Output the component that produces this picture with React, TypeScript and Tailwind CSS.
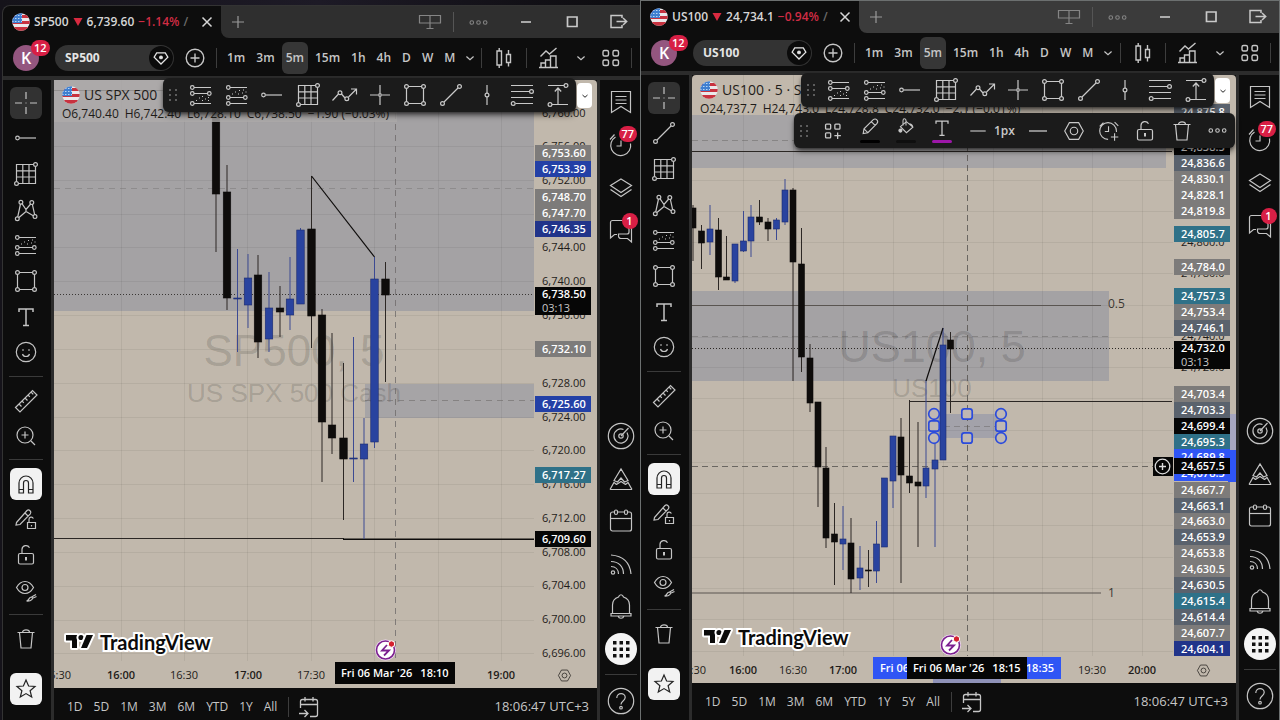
import type { ReactNode } from 'react';
import clsx from 'clsx';

type Candle = [x: number, high: number, top: number, bottom: number, low: number, up?: 1];
type Tag = { y: number; text: string; tone: Tone; sub?: string };
type Tone = 'gray' | 'slate' | 'black' | 'blue' | 'navy' | 'teal' | 'bright' | 'plain';
type TimeTag = { x: number; text: string; bold?: boolean };

const TONES: Record<Tone, string> = {
  gray: 'bg-[#7d7b7a] text-white font-semibold',
  slate: 'bg-[#5a626d] text-white font-semibold',
  black: 'bg-[#060606] text-white font-semibold',
  blue: 'bg-[#2340a6] text-white font-semibold',
  navy: 'bg-[#21348a] text-white font-semibold',
  teal: 'bg-[#2f7188] text-white font-semibold',
  bright: 'bg-[#2f55f5] text-white font-semibold',
  plain: 'text-[#1f1c19]',
};

/* ---------- icons ---------- */

function Icon({ children, size = 28 }: { children: ReactNode; size?: number }) {
  return (
    <svg
      width={size}
      height={size}
      viewBox="0 0 28 28"
      fill="none"
      stroke="currentColor"
      strokeWidth="1.2"
      className="shrink-0"
      aria-hidden="true"
    >
      {children}
    </svg>
  );
}

const icons = {
  cross: <path d="M14 3v7M14 18v7M3 14h7M18 14h7M13.5 14h1" />,
  ray: (
    <>
      <circle cx="5.5" cy="14" r="1.8" />
      <path d="M7.5 14H24" />
    </>
  ),
  trend: (
    <>
      <circle cx="5.5" cy="22.5" r="1.9" />
      <circle cx="22.5" cy="5.5" r="1.9" />
      <path d="M7 21 21 7" />
    </>
  ),
  gann: (
    <>
      <path d="M21 4.500H4.500V21M7 23.500h16.500V7M4.500 10.800h19M4.500 17h19M10.800 4.500v19M17 4.500v19" />
      <circle cx="23.500" cy="4.500" r="1.900" />
      <circle cx="4.500" cy="23.500" r="1.900" />
    </>
  ),
  pattern: (
    <>
      <path d="M5.700 21 8.500 8M9.800 7.300l4.200 6.200 4.700-5.500M20.300 8.200l2.400 10.600M7 21.500l7-6 7.300 4.200M14 13.500v2" />
      <circle cx="5.300" cy="22.800" r="1.900" />
      <circle cx="8.900" cy="6.200" r="1.900" />
      <circle cx="19.800" cy="6.600" r="1.900" />
      <circle cx="23" cy="20.600" r="1.900" />
    </>
  ),
  fib: (
    <>
      <path d="M7 6.500h17M7 12.500h13.500M7 22.500h17" />
      <circle cx="5.300" cy="6.500" r="1.800" />
      <circle cx="5.300" cy="12.500" r="1.800" />
      <circle cx="22.300" cy="12.500" r="1.800" />
      <circle cx="5.300" cy="22.500" r="1.800" />
      <path d="M9 19.500h1M12 17h1M15 19.500h1M15 15.500h1M18 18h1M21 16.500h1M21 19.500h1" />
    </>
  ),
  fibChannel: (
    <>
      <path d="M7 6.500h17M7 16.500h13.500M7 22.500h17" />
      <circle cx="5.300" cy="6.500" r="1.800" />
      <circle cx="5.300" cy="16.500" r="1.800" />
      <circle cx="22.300" cy="16.500" r="1.800" />
      <circle cx="5.300" cy="22.500" r="1.800" />
      <path d="M9 13h1M12 11h1M15 13h1M16 9.500h1M19 12h1M20 9h1M22.500 11h1" />
    </>
  ),
  rect: (
    <>
      <path d="M7.500 5.500h13M7.500 22.500h13M5.500 7.500v13M22.500 7.500v13" />
      <circle cx="5.500" cy="5.500" r="1.900" />
      <circle cx="22.500" cy="5.500" r="1.900" />
      <circle cx="5.500" cy="22.500" r="1.900" />
      <circle cx="22.500" cy="22.500" r="1.900" />
    </>
  ),
  path: (
    <>
      <path d="m2.500 19.500 6-6.500M11.500 13l3.500 4M18.500 16 26 8.500M21 8h5.500v5.500" />
      <circle cx="10" cy="11.800" r="1.900" />
      <circle cx="16.800" cy="17.800" r="1.900" />
    </>
  ),
  crossLine: (
    <>
      <path d="M14 4v8M14 16v8M4 14h8M16 14h8" />
      <circle cx="14" cy="14" r="1.300" />
    </>
  ),
  vline: (
    <>
      <path d="M14 4v8M14 16v8" />
      <circle cx="14" cy="14" r="1.900" />
    </>
  ),
  levels: (
    <>
      <path d="M3 4.500h22M3 10.500h18.500M3 16.500h22M7.500 22.500H25" />
      <circle cx="23.500" cy="10.500" r="1.900" />
      <circle cx="5.200" cy="22.500" r="1.900" />
    </>
  ),
  range: (
    <>
      <path d="M4 4.500h16M8 23.500h16M14 8v15M10.800 10.500 14 7l3.200 3.500" />
      <circle cx="22" cy="4.500" r="1.900" />
      <circle cx="6" cy="23.500" r="1.900" />
    </>
  ),
  text: <path strokeWidth="1.500" d="M7 9V6h14v3M14 6v16.500M11 22.500h6" />,
  smile: (
    <>
      <circle cx="14" cy="14" r="9.700" />
      <path d="M10.500 16c.8 3.300 6.200 3.300 7 0" />
      <path strokeWidth="2" d="M10.500 12h1M16.500 12h1" />
    </>
  ),
  ruler: (
    <path d="M3.500 20.500 20.500 3.500l4.500 4.500L8 25zM7 17l2.500 2.500M10 14l1.800 1.800M13 11l2.500 2.500M16 8l1.800 1.800M19 5l2.300 2.300" />
  ),
  zoom: (
    <>
      <circle cx="13" cy="13" r="8" />
      <path d="M13 9.500v7M9.500 13h7M19 19l4 4" />
    </>
  ),
  magnet: <path d="M7 23V13a7 7 0 0 1 14 0v10h-4.500V13a2.500 2.500 0 0 0-5 0v10zM7 19.500h4.500M16.500 19.500H21" />,
  pencilLock: (
    <>
      <path d="M4.500 17.500 15 5.500c2-1.500 5 1 3.300 3.300L8 19.500l-4 .5zM13 8l3 3M15.500 17.500h8v6h-8zM17 17.500v-3a2.200 2.200 0 0 1 4.300-.8M19.500 20v1.500" />
    </>
  ),
  unlock: (
    <>
      <rect x="6.500" y="12.500" width="15" height="10.500" rx="1.500" />
      <path d="M10 12.500V8.300a4 4 0 0 1 7.500-1.600" />
      <path strokeWidth="2" d="M14 16v3.500" />
    </>
  ),
  eye: (
    <>
      <path d="M4.500 11.500C9 3.500 17 3.500 21.500 11.500 17 19.500 9 19.500 4.500 11.500zM14.500 25c3-.500 2-4 5-4 2.500 1 0 4.500-5 4zM19.500 21l4.500-2.500M20 22.500l4.500-2" />
      <circle cx="13" cy="11.500" r="3" />
    </>
  ),
  trash: <path d="M5.500 7.500h17M7.500 7.500l1.500 15.500h10l1.500-15.500M10.500 7.500c0-3.500 7-3.500 7 0" />,
  star: <path d="m14 5 2.600 6 6.400.500-4.900 4.200 1.600 6.300L14 18.600 8.300 22l1.600-6.300L5 11.500l6.400-.500z" />,
  notes: <path d="M4.500 3.500h19v21L14 18.500l-9.500 6zM8.500 8.500h11M8.500 12h11M8.500 15.500h11" />,
  alarm: <path d="M8.500 6A10 10 0 1 0 23.500 12.500M14 9.500V15H9.500M3 8.500l4.500-5" />,
  layers: <path d="m14 5 10.500 6.500L14 18.500 3.500 11.500zM3.500 15.500 14 22.500l10.500-7" />,
  chat: (
    <path d="M21.500 12V5.500a2 2 0 0 0-2-2h-14a2 2 0 0 0-2 2V21l4-3.500H10M24.500 10.500V25l-4-3.500h-6.500a2.500 2.500 0 0 1-2.500-2.500v-2h8.500a2 2 0 0 0 2-2V12" />
  ),
  radar: (
    <>
      <circle cx="14" cy="14" r="12.700" />
      <path d="M20 10.500A7 7 0 1 1 16.500 7.500M14 14l7.500-8" />
      <circle cx="14" cy="14" r="2.200" />
    </>
  ),
  pyramids: <path d="m3 24.500 4-7 2.500 2M25 24.500l-4-7-2.500 2M3 24.500h22M9.500 19.500l4.500-3 4.500 3M7 15.500l7-11.500 7 11.500-3.500 1.500-3.500-4-3.500 4z" />,
  calendar: (
    <>
      <rect x="3.500" y="5" width="21" height="19" rx="2" />
      <path d="M3.500 11.500h21" />
      <rect x="7.500" y="3" width="3" height="4.500" rx="1.500" fill="#0d0d0d" />
      <rect x="17.500" y="3" width="3" height="4.500" rx="1.500" fill="#0d0d0d" />
    </>
  ),
  feed: (
    <>
      <circle cx="6" cy="22.500" r="1.700" />
      <path d="M4 16.500c4.500 0 7.500 3 7.500 7.500M4 11.500c7.500 0 12.500 5 12.500 12.500M4 5c12 1 19 8 20 19" />
    </>
  ),
  bell: <path d="M4 21.500h20v2.500H4zM5.500 21.500V13c0-4.500 3-7 6-8 1-3 4-3 5 0 3 1 6 3.500 6 8v8.500M11 24c1 3 5 3 6 0" />,
  help: (
    <>
      <circle cx="14" cy="14" r="12.700" />
      <path d="M9.800 11c0-6 8.700-5.500 8.400-.500-.200 3.500-4.200 3.500-4.200 7" />
      <circle cx="14" cy="20.700" r="1.300" />
    </>
  ),
  hex: (
    <>
      <path d="M9 5h10l5 9-5 9H9l-5-9z" />
      <circle cx="14" cy="14" r="4" />
    </>
  ),
  candles: <path strokeWidth="1.400" d="M7 7h4.500v14H7zM9.200 4v3M9.200 21v3M16.500 10.500h4v8h-4zM18.500 6v4.500M18.500 18.500v4" />,
  indicators: (
    <path
      strokeWidth="1.400"
      d="m5.500 12.500 5.500-5.500 3.500 3 7-6M6 23.500v-4.500h4.500v4.500zM10.500 23.500V16h5v7.500zM15.500 23.500V12h5.500v11.500zM4 23.500h19"
    />
  ),
  tiles: (
    <>
      <rect x="6" y="6.500" width="5.500" height="5.500" rx="1.500" strokeWidth="1.400" />
      <rect x="16" y="6.500" width="5.500" height="5.500" rx="1.500" strokeWidth="1.400" />
      <rect x="6" y="16" width="5.500" height="5.500" rx="1.500" strokeWidth="1.400" />
      <rect x="16" y="16" width="5.500" height="5.500" rx="1.500" strokeWidth="1.400" />
    </>
  ),
  template: (
    <>
      <rect x="6" y="6.500" width="5.500" height="5.500" rx="1" strokeWidth="1.400" />
      <rect x="16" y="6.500" width="5.500" height="5.500" rx="1" strokeWidth="1.400" />
      <rect x="6" y="16" width="5.500" height="5.500" rx="1" strokeWidth="1.400" />
      <path strokeWidth="1.400" d="M19 15.500v7M15.500 19h7" />
    </>
  ),
  plusCircle: (
    <>
      <circle cx="14" cy="14" r="8.800" strokeWidth="1.400" />
      <path strokeWidth="1.400" d="M14 9.500v9M9.500 14h9" />
    </>
  ),
  gem: (
    <>
      <path d="M9 8h10l3 5-8 8-8-8z" strokeWidth="1.500" />
      <circle cx="14" cy="13.300" r="1.600" fill="currentColor" />
    </>
  ),
  goTo: (
    <path
      strokeWidth="1.300"
      d="M5.500 15V8.500a2 2 0 0 1 2-2h13a2 2 0 0 1 2 2v13a2 2 0 0 1-2 2H15M5.500 11.500h17M10 4v4.500M18 4v4.500M4 20.500h8.500M9.500 17l3.500 3.500L9.500 24"
    />
  ),
  chevron: <path strokeWidth="1.700" d="m9 12 5 4.500 5-4.500" />,
  plus: <path d="M14 8v12M8 14h12" />,
  close: <path strokeWidth="1.500" d="m9.500 9.500 9 9M18.500 9.500l-9 9" />,
  dots: (
    <>
      <circle cx="6.500" cy="14" r="2" />
      <circle cx="14" cy="14" r="2" />
      <circle cx="21.500" cy="14" r="2" />
    </>
  ),
  signpost: <path d="M3.500 7.500h21v7.500h-21zM14 7v13M10.500 20.500h7" />,
  minimize: <path strokeWidth="1.600" d="M9 14h10" />,
  maximize: <path strokeWidth="1.700" d="M9.500 9h9.500v9.500H9.500z" />,
  exit: <path strokeWidth="1.500" d="M18 10V7.500H7v12h11V17M12.500 13.500h10M19 10l3.700 3.500L19 17" />,
  pencil: <path strokeWidth="1.300" d="M6 20.500 7 15 17.500 4.500q2.500-2 4.500 0t0 4.500L11.500 19.500zM15.500 6.500l4.500 4.500M7 15l4.500 4.500" />,
  bucket: (
    <>
      <path d="m7.500 12.500 7-6 7.500 6.500-7.500 6.500zM14 11V5.500c0-3-3.500-3-3.500 0V11M22 13.500c0-2-1.500-4-4-4.500" />
      <circle cx="7.500" cy="17" r="1.800" fill="currentColor" />
    </>
  ),
  line: <path strokeWidth="1.300" d="M5 14h18" />,
  alarmAdd: (
    <path d="M13 23a9 9 0 1 1 9-9v1M13.500 9v5.500H9.500M4 9l4-4M20 4.500l4 4M20 16.500v8M16 20.500h8" />
  ),
};

type IconName = keyof typeof icons;

function ToolButton({ name, size, className }: { name: IconName; size?: number; className?: string }) {
  return (
    <button type="button" aria-label={name} className={clsx('flex items-center justify-center', className)}>
      <Icon size={size}>{icons[name]}</Icon>
    </button>
  );
}

function Flag() {
  return (
    <svg width="18" height="18" viewBox="0 0 18 18" className="shrink-0" aria-hidden="true">
      <clipPath id="flag-disc">
        <circle cx="9" cy="9" r="8.700" />
      </clipPath>
      <g clipPath="url(#flag-disc)">
        <path fill="#ece8ea" d="M0 0h18v18H0z" />
        <path fill="#c8323f" d="M0 2h18v3H0zM0 8h18v3H0zM0 14h18v4H0z" />
        <path fill="#3f7fd0" d="M0 0h10v10H0z" />
        <path stroke="#b9d6f3" strokeWidth="1" strokeDasharray="1.500 1.500" d="M0 2.500h10M0 5.500h10M0 8.500h10" />
      </g>
    </svg>
  );
}

function Grip() {
  return (
    <svg width="10" height="14" viewBox="0 0 10 14" fill="#5c5c5c" className="mx-[5px] shrink-0" aria-hidden="true">
      {[1, 6, 11].map((y) => (
        <g key={y}>
          <rect x="1" y={y} width="2" height="2" />
          <rect x="7" y={y} width="2" height="2" />
        </g>
      ))}
    </svg>
  );
}

function Separator() {
  return <span className="h-5 w-px shrink-0 bg-[#3d3d3d]" />;
}

function Badge({ children, className }: { children: ReactNode; className: string }) {
  return (
    <span
      className={clsx(
        'absolute flex h-4 min-w-4 items-center justify-center rounded-full bg-[#d81f45] px-[3px] text-[11px] font-semibold text-white',
        className,
      )}
    >
      {children}
    </span>
  );
}

/* ---------- window chrome ---------- */

function TabBar({ symbol, price, change, light }: { symbol: string; price: string; change: string; light?: boolean }) {
  return (
    <div className="flex h-8 shrink-0">
      <div className="flex w-[218px] shrink-0 items-center pl-[9px] text-xs font-semibold text-[#d6d6d6]">
        <Flag />
        <span className="ml-1">{symbol}</span>
        <svg width="10" height="10" viewBox="0 0 10 10" className="mx-1 shrink-0" aria-hidden="true">
          <path d="M.500 1h9L5 9z" fill="#d92a40" />
        </svg>
        <span>{price}</span>
        <span className="ml-1 text-[#d02c44]">{change}</span>
        <span className="ml-1 text-[#6a6a6a]">/</span>
        <ToolButton name="close" size={28} className="ml-auto" />
      </div>
      <div
        className={clsx(
          'flex min-w-0 flex-1 items-center rounded-bl-lg pl-[3px] text-[#c9c9c9]',
          light ? 'bg-[#3b3b3b]' : 'bg-[#2f2f2f]',
        )}
      >
        <ToolButton name="plus" className="text-[#9a9a9a]" />
        <div className="ml-auto flex items-center pr-2">
          <ToolButton name="signpost" className="mr-[9px] text-[#858585]" />
          <span className="h-5 w-px bg-[#555]" />
          <ToolButton name="dots" size={25} className="mx-3 text-[#858585]" />
          <ToolButton name="minimize" className="mx-[9px]" />
          <ToolButton name="maximize" className="mx-[9px]" />
          <ToolButton name="exit" className="ml-[9px]" />
        </div>
      </div>
    </div>
  );
}

const INTERVALS = ['1m', '3m', '5m', '15m', '1h', '4h', 'D', 'W', 'M'];

function Header({ symbol }: { symbol: string }) {
  return (
    <div className="flex h-[38px] shrink-0 items-center pt-[2px] text-[#c6c6c6]">
      <button
        type="button"
        className="relative ml-[10px] size-[26px] shrink-0 rounded-full bg-[#94567f] text-base leading-[26px] font-semibold text-white"
      >
        K
        <Badge className="-top-[5px] left-[18px]">12</Badge>
      </button>
      <button
        type="button"
        className="ml-4 flex h-[26px] w-[119px] shrink-0 items-center justify-between rounded-full bg-[#333] pr-px pl-2.5 text-xs font-bold text-[#e4e4e4]"
      >
        {symbol}
        <span className="flex size-6 items-center justify-center rounded-full bg-[#0b0b0b]">
          <Icon size={24}>{icons.gem}</Icon>
        </span>
      </button>
      <ToolButton name="plusCircle" className="mx-[7px]" />
      <Separator />
      <div className="ml-[5px] flex items-center gap-px text-xs font-semibold">
        {INTERVALS.map((item) => (
          <button
            key={item}
            type="button"
            className={clsx(item === '5m' ? 'mx-px h-8 rounded-md bg-[#363636] px-1' : 'px-[5px]')}
          >
            {item}
          </button>
        ))}
      </div>
      <ToolButton name="chevron" size={20} />
      <div className="ml-auto flex items-center">
        <Separator />
        <ToolButton name="candles" className="mx-2" />
        <Separator />
        <ToolButton name="indicators" className="mx-2" />
        <ToolButton name="chevron" size={20} />
        <ToolButton name="tiles" className="mx-1.5" />
        <Separator />
        <span className="w-2" />
      </div>
    </div>
  );
}

function LeftRail({ second }: { second: IconName }) {
  const draw: IconName[] = ['cross', second, 'gann', 'pattern', 'fibChannel', 'rect', 'text', 'smile'];
  const lock: IconName[] = ['magnet', 'pencilLock', 'unlock', 'eye'];
  return (
    <nav className="flex w-12 shrink-0 flex-col items-center pt-[5px] pr-[2px] text-[#c4c4c4]">
      <div className="flex h-[285px] flex-col">
        {draw.map((name) => (
          <div key={name} className="flex flex-1 items-center">
            <ToolButton name={name} className={clsx('size-8', name === 'cross' && 'rounded-md bg-[#323232]')} />
          </div>
        ))}
      </div>
      <hr className="my-[6px] w-[34px] border-[#3a3a3a]" />
      <ToolButton name="ruler" className="h-[35px]" />
      <ToolButton name="zoom" className="h-[35px]" />
      <hr className="my-[6px] w-[34px] border-[#3a3a3a]" />
      <div className="flex h-[142px] flex-col">
        {lock.map((name) => (
          <div key={name} className="flex flex-1 items-center">
            <ToolButton
              name={name}
              className={clsx('size-8', name === 'magnet' && 'rounded-md bg-[#f2f2f2] text-[#222]')}
            />
          </div>
        ))}
      </div>
      <hr className="my-[6px] w-[34px] border-[#3a3a3a]" />
      <ToolButton name="trash" className="h-9" />
      <ToolButton name="star" className="mt-4 size-8 rounded-md bg-[#f2f2f2] text-[#222]" />
    </nav>
  );
}

function RightRail() {
  const lower: IconName[] = ['radar', 'pyramids', 'calendar', 'feed', 'bell'];
  return (
    <nav className="flex w-10 shrink-0 flex-col items-center pl-px text-[#c4c4c4]">
      <ToolButton name="notes" className="h-11" />
      <div className="relative">
        <ToolButton name="alarm" className="h-[42px]" />
        <Badge className="top-[2px] left-3">77</Badge>
      </div>
      <ToolButton name="layers" className="h-[43px]" />
      <div className="relative">
        <ToolButton name="chat" className="h-11" />
        <Badge className="top-1 left-[15px]">1</Badge>
      </div>
      <div className="mt-[162px] flex h-[255px] flex-col">
        {lower.map((name) => (
          <ToolButton key={name} name={name} className="flex-1" />
        ))}
        <button type="button" aria-label="apps" className="flex flex-1 items-center justify-center">
          <svg width="32" height="32" viewBox="0 0 32 32" aria-hidden="true">
            <circle cx="16" cy="16" r="16" fill="#f4f4f4" />
            {[8, 14.5, 21].map((y) => [8, 14.5, 21].map((x) => (
              <rect key={`${x}-${y}`} x={x} y={y} width="3.500" height="3.500" fill="#111" />
            )))}
          </svg>
        </button>
      </div>
      <hr className="mt-1 mb-3 w-8 border-[#3a3a3a]" />
      <ToolButton name="help" />
    </nav>
  );
}

function Footer({ ranges }: { ranges: string[] }) {
  return (
    <div className="flex h-[37px] shrink-0 items-center bg-[#0d0d0d] pl-2 text-[#c6c6c6]">
      <div className="flex gap-px text-xs font-medium">
        {ranges.map((range) => (
          <button key={range} type="button" className="px-[5px]">
            {range}
          </button>
        ))}
      </div>
      <span className="mx-1.5 h-5 w-px bg-[#3d3d3d]" />
      <ToolButton name="goTo" />
      <button type="button" className="mr-2 ml-auto text-[13px] font-medium">
        18:06:47 UTC+3
      </button>
    </div>
  );
}

/* ---------- chart pieces ---------- */

function Candles({ data, width }: { data: Candle[]; width: number }) {
  return (
    <g>
      {data.map(([x, high, top, bottom, low, up]) => (
        <g key={x}>
          <path d={`M${x} ${high}V${low}`} stroke={up ? '#3c4a93' : '#2c2724'} strokeWidth="1" />
          <rect
            x={x - width / 2}
            y={top}
            width={width}
            height={Math.max(bottom - top, 1)}
            fill={up ? '#29439f' : '#0e0c0b'}
            stroke={up ? '#1c2b6e' : '#0e0c0b'}
            strokeWidth="0.600"
          />
        </g>
      ))}
    </g>
  );
}

function Grid({ xs, ys }: { xs: number[]; ys: number[] }) {
  return (
    <g stroke="#000" strokeOpacity="0.060">
      {xs.map((x) => (
        <path key={x} d={`M${x}.500 0V900`} />
      ))}
      {ys.map((y) => (
        <path key={y} d={`M0 ${y}.500H2000`} />
      ))}
    </g>
  );
}

function PriceAxis({ tags, top, children }: { tags: Tag[]; top: number; children?: ReactNode }) {
  return (
    <div className="relative w-[63px] shrink-0 overflow-hidden text-[11px]">
      {children}
      {tags.map(({ y, text, tone, sub }) => (
        <div
          key={`${y}-${text}`}
          className={clsx(
            'absolute left-px w-14 -translate-y-1/2 pl-[7px] leading-[14px]',
            tone !== 'plain' && (sub ? 'py-0' : 'py-px'),
            TONES[tone],
          )}
          style={{ top: y - top }}
        >
          {text}
          {sub && <div className="font-normal text-[#c9c9c9]">{sub}</div>}
        </div>
      ))}
    </div>
  );
}

function TimeAxis({ labels, left, children }: { labels: TimeTag[]; left: number; children: ReactNode }) {
  return (
    <div className="relative h-[27px] shrink-0 overflow-hidden text-[11px] text-[#1f1c19]">
      {labels.map(({ x, text, bold }) => (
        <span
          key={x}
          className={clsx('absolute top-1.5 -translate-x-1/2 leading-4', bold && 'font-semibold')}
          style={{ left: x - left }}
        >
          {text}
        </span>
      ))}
      {children}
      <button type="button" aria-label="axis settings" className="absolute top-1.5 right-6">
        <Icon size={17}>{icons.hex}</Icon>
      </button>
    </div>
  );
}

function Legend({ title, values, className }: { title: string; values: string[]; className?: string }) {
  return (
    <div className={clsx('absolute top-0 left-0 pt-[6px] pr-2 pl-2 text-[#1f1c19]', className)}>
      <div className="flex items-center gap-1 text-sm leading-4">
        <Flag />
        {title}
      </div>
      <div className="mt-[2px] flex gap-1.5 text-xs leading-4">
        {values.map((value) => (
          <span key={value}>{value}</span>
        ))}
      </div>
    </div>
  );
}

function Brand() {
  return (
    <div className="absolute bottom-[34px] left-2.5 flex items-center gap-1">
      <svg width="32" height="22" viewBox="0 0 32 22" aria-hidden="true">
        <g fill="#0b0b0b" stroke="#fff" strokeWidth="4" strokeLinejoin="round" paintOrder="stroke">
          <path d="M2 4h11v13H8V9.500H2z" />
          <circle cx="17" cy="6.500" r="2.600" />
          <path d="M22.500 4h6.500L23 17h-6z" />
        </g>
      </svg>
      <span className="font-[Lato] text-xl leading-6 font-bold text-[#0b0b0b] [-webkit-text-stroke:4px_#fff] [paint-order:stroke]">
        TradingView
      </span>
    </div>
  );
}

function EventMarker({ x, y }: { x: number; y: number }) {
  return (
    <g>
      <circle cx={x} cy={y} r="10.500" fill="#f1dcf5" />
      <circle cx={x} cy={y} r="9" fill="#fff" stroke="#7b1f8f" strokeWidth="1.600" />
      <path d={`M${x + 1.5} ${y - 5}l-5 5.500h7l-5 5`} fill="none" stroke="#7b1f8f" strokeWidth="1.800" />
      <circle cx={x + 6} cy={y - 6} r="3.200" fill="#d4202f" stroke="#fff" strokeWidth="1" />
    </g>
  );
}

const FAVORITES: IconName[] = [
  'fib', 'fibChannel', 'ray', 'gann', 'path', 'crossLine', 'rect', 'trend', 'vline', 'levels', 'range',
];

function FavoritesBar() {
  return (
    <>
      <div className="absolute -top-[2px] left-[109px] flex h-[34px] w-[413px] items-center rounded-md bg-[#1b1b1b] text-[#c9c9c9] shadow-md shadow-black/60">
        <Grip />
        {FAVORITES.map((name) => (
          <ToolButton key={name} name={name} className="flex-1" />
        ))}
      </div>
      <button
        type="button"
        aria-label="more"
        className="absolute top-[3px] left-[523px] flex h-[25px] w-[15px] items-center justify-center rounded-sm bg-white text-black"
      >
        <Icon size={14}>{icons.chevron}</Icon>
      </button>
    </>
  );
}

function SwatchButton({ name, color }: { name: IconName; color: string }) {
  return (
    <button type="button" aria-label={name} className="flex w-9 flex-col items-center pb-[2px]">
      <Icon size={24}>{icons[name]}</Icon>
      <span className={clsx('h-[3px] w-5 rounded-full', color)} />
    </button>
  );
}

function ShapeBar() {
  return (
    <div className="absolute top-[38px] left-[102px] flex h-[35px] w-[441px] items-center rounded-md bg-[#1b1b1b] text-[#c9c9c9] shadow-md shadow-black/60">
      <Grip />
      <ToolButton name="template" size={26} className="w-[38px]" />
      <SwatchButton name="pencil" color="bg-black" />
      <SwatchButton name="bucket" color="bg-[#0f0f0f]" />
      <SwatchButton name="text" color="bg-[#9c17a8]" />
      <button type="button" className="mr-1 ml-1.5 flex items-center gap-1 text-xs font-semibold">
        <Icon size={24}>{icons.line}</Icon>
        1px
      </button>
      <div className="flex flex-1 items-center justify-around">
        <ToolButton name="line" size={28} />
        <ToolButton name="hex" size={26} />
        <ToolButton name="alarmAdd" size={26} />
        <ToolButton name="unlock" size={28} />
        <ToolButton name="trash" size={28} />
        <ToolButton name="dots" size={25} />
      </div>
    </div>
  );
}

/* ---------- SP500 ---------- */

const SP_CANDLES: Candle[] = [
  [216, 60, 60, 194, 252],
  [227, 165, 192, 298, 310],
  [237.5, 249, 298, 299, 352, 1],
  [248, 254, 278, 305, 328, 1],
  [258, 255, 275, 342, 358],
  [269, 272, 308, 339, 352, 1],
  [280, 286, 308, 312, 337],
  [290, 257, 299, 315, 330, 1],
  [300.5, 228, 230, 304, 304, 1],
  [311.5, 176, 229, 316, 348],
  [322, 309, 315, 422, 482],
  [332, 333, 425, 438, 454],
  [343.5, 363, 438, 459, 520],
  [353.5, 337, 458, 459, 482, 1],
  [364, 418, 444, 459, 539, 1],
  [374.5, 257, 279, 442, 448, 1],
  [385.5, 262, 279, 295, 382],
];

const SP_TAGS: Tag[] = [
  { y: 113, text: '6,760.00', tone: 'plain' },
  { y: 146, text: '6,756.00', tone: 'plain' },
  { y: 180, text: '6,752.00', tone: 'plain' },
  { y: 247, text: '6,744.00', tone: 'plain' },
  { y: 281, text: '6,740.00', tone: 'plain' },
  { y: 315, text: '6,736.00', tone: 'plain' },
  { y: 383, text: '6,728.00', tone: 'plain' },
  { y: 417, text: '6,724.00', tone: 'plain' },
  { y: 450, text: '6,720.00', tone: 'plain' },
  { y: 484, text: '6,716.00', tone: 'plain' },
  { y: 518, text: '6,712.00', tone: 'plain' },
  { y: 552, text: '6,708.00', tone: 'plain' },
  { y: 585, text: '6,704.00', tone: 'plain' },
  { y: 619, text: '6,700.00', tone: 'plain' },
  { y: 653, text: '6,696.00', tone: 'plain' },
  { y: 153, text: '6,753.60', tone: 'gray' },
  { y: 169, text: '6,753.39', tone: 'blue' },
  { y: 197, text: '6,748.70', tone: 'gray' },
  { y: 213, text: '6,747.70', tone: 'gray' },
  { y: 229, text: '6,746.35', tone: 'navy' },
  { y: 301, text: '6,738.50', tone: 'black', sub: '03:13' },
  { y: 349, text: '6,732.10', tone: 'gray' },
  { y: 404, text: '6,725.60', tone: 'blue' },
  { y: 475, text: '6,717.27', tone: 'teal' },
  { y: 539, text: '6,709.60', tone: 'black' },
];

const SP_TIMES: TimeTag[] = [
  { x: 57, text: '15:30' },
  { x: 121, text: '16:00', bold: true },
  { x: 184, text: '16:30' },
  { x: 248, text: '17:00', bold: true },
  { x: 311, text: '17:30' },
  { x: 501, text: '19:00', bold: true },
];

function SpChart() {
  return (
    <>
      <div className="flex min-h-0 flex-1">
        <svg className="h-full min-w-0 flex-1 overflow-hidden" role="img" aria-label="SP500 chart">
          <g transform="translate(-54 -80)">
            <path d="M0 0h2000v311H0z" fill="#a4a2a4" />
            <path d="M365 384h2000v34H365z" fill="#a6a4a6" />
            <Grid
              xs={[121, 184, 247, 311, 374, 438, 501]}
              ys={[146, 180, 214, 247, 281, 315, 349, 383, 417, 450, 484, 518, 552, 586, 620, 653]}
            />
            <g fill="#000" fillOpacity="0.150" textAnchor="middle" className="font-['Liberation_Sans']">
              <text x="294" y="366" fontSize="44">SP500, 5</text>
              <text x="294" y="402" fontSize="26">US SPX 500 Cash</text>
            </g>
            <g stroke="#6f6c6b" strokeDasharray="6 5">
              <path d="M54 188.500H2000" strokeOpacity="0.400" />
              <path d="M365 400.500H2000" strokeOpacity="0.600" />
              <path d="M395.500 80V670" strokeOpacity="0.800" />
            </g>
            <path d="M54 294.500H2000" stroke="#3a3735" strokeDasharray="1 2" />
            <path d="M54 90.500h150M54 538.500h290" stroke="#2b2724" />
            <path d="M343 539.250H2000" stroke="#0e0c0b" strokeWidth="1.500" />
            <Candles data={SP_CANDLES} width={7.5} />
            <path d="m311.500 176 63 81" stroke="#0e0c0b" strokeWidth="1.200" />
            <EventMarker x={385.5} y={650} />
          </g>
        </svg>
        <PriceAxis tags={SP_TAGS} top={80} />
      </div>
      <TimeAxis labels={SP_TIMES} left={54}>
        <div className="absolute top-px left-[281px] flex h-[22px] items-center gap-2 bg-[#060606] px-1.5 text-[11px] font-semibold whitespace-nowrap text-white">
          <span>Fri 06 Mar '26</span>
          <span>18:10</span>
        </div>
      </TimeAxis>
      <Legend
        title="US SPX 500"
        values={['O6,740.40', 'H6,742.40', 'L6,728.10', 'C6,738.50', '−1.90 (−0.03%)']}
        className="bg-[#aeabaa]/80"
      />
    </>
  );
}

/* ---------- US100 ---------- */

const US_CANDLES: Candle[] = [
  [693, 205, 208, 228, 261],
  [701.5, 225, 231, 243, 269],
  [710, 205, 229, 242, 255, 1],
  [718.5, 218, 230, 277, 290],
  [726.5, 236, 277, 280, 280],
  [735, 244, 244, 281, 283, 1],
  [743.5, 211, 241, 251, 252, 1],
  [751, 205, 217, 241, 257, 1],
  [759.5, 200, 217, 222, 225],
  [768, 218, 222, 229, 241],
  [776.5, 218, 220, 229, 240, 1],
  [785, 179, 190, 222, 225, 1],
  [793, 188, 190, 262, 381],
  [801.5, 228, 264, 357, 372],
  [810, 344, 358, 403, 412],
  [818, 402, 402, 467, 507],
  [826, 447, 468, 538, 548],
  [834.5, 503, 534, 542, 585],
  [843, 506, 539, 544, 570, 1],
  [851, 518, 543, 579, 593],
  [860, 546, 568, 578, 590, 1],
  [868.5, 550, 570, 571, 587],
  [876.5, 521, 544, 571, 583, 1],
  [884.5, 478, 478, 547, 547, 1],
  [893, 436, 436, 481, 508, 1],
  [901, 418, 437, 475, 583],
  [909.5, 400, 476, 483, 493],
  [918, 422, 482, 486, 547],
  [926, 380, 468, 486, 498, 1],
  [935, 440, 460, 469, 547, 1],
  [943, 328, 345, 460, 460, 1],
  [950.5, 332, 340, 349, 413],
];

const US_TAGS: Tag[] = [
  { y: 242, text: '24,800.0', tone: 'plain' },
  { y: 273, text: '24,780.0', tone: 'plain' },
  { y: 336, text: '24,740.0', tone: 'plain' },
  { y: 367, text: '24,720.0', tone: 'plain' },
  { y: 112, text: '24,875.8', tone: 'slate' },
  { y: 147, text: '24,838.5', tone: 'black' },
  { y: 163, text: '24,836.6', tone: 'slate' },
  { y: 179, text: '24,830.1', tone: 'gray' },
  { y: 195, text: '24,828.1', tone: 'gray' },
  { y: 211, text: '24,819.8', tone: 'gray' },
  { y: 234, text: '24,805.7', tone: 'teal' },
  { y: 267, text: '24,784.0', tone: 'gray' },
  { y: 296, text: '24,757.3', tone: 'teal' },
  { y: 312, text: '24,753.4', tone: 'gray' },
  { y: 328, text: '24,746.1', tone: 'slate' },
  { y: 355, text: '24,732.0', tone: 'black', sub: '03:13' },
  { y: 394, text: '24,703.4', tone: 'gray' },
  { y: 410, text: '24,703.3', tone: 'slate' },
  { y: 426, text: '24,699.4', tone: 'black' },
  { y: 442, text: '24,695.3', tone: 'teal' },
  { y: 457, text: '24,689.8', tone: 'bright' },
  { y: 473, text: '24,678.3', tone: 'bright' },
  { y: 466, text: '24,657.5', tone: 'black' },
  { y: 490, text: '24,667.7', tone: 'gray' },
  { y: 506, text: '24,663.1', tone: 'slate' },
  { y: 521, text: '24,663.0', tone: 'gray' },
  { y: 537, text: '24,653.9', tone: 'slate' },
  { y: 553, text: '24,653.8', tone: 'gray' },
  { y: 569, text: '24,630.5', tone: 'gray' },
  { y: 585, text: '24,630.5', tone: 'slate' },
  { y: 601, text: '24,615.4', tone: 'teal' },
  { y: 617, text: '24,614.4', tone: 'slate' },
  { y: 633, text: '24,607.7', tone: 'gray' },
  { y: 649, text: '24,604.1', tone: 'navy' },
];

const US_TIMES: TimeTag[] = [
  { x: 692, text: '15:30' },
  { x: 743, text: '16:00', bold: true },
  { x: 793, text: '16:30' },
  { x: 843, text: '17:00', bold: true },
  { x: 1092, text: '19:30' },
  { x: 1142, text: '20:00', bold: true },
];

const CORNERS = [[934, 414], [934, 438], [1001, 414], [1001, 438]];
const EDGES = [[934, 426], [967, 414], [967, 438], [1001, 426]];

function UsChart() {
  return (
    <>
      <div className="flex min-h-0 flex-1">
        <svg className="h-full min-w-0 flex-1 overflow-hidden" role="img" aria-label="US100 chart">
          <g transform="translate(-692 -75)">
            <path d="M600 115h566v53H600z" fill="#a6a4a6" />
            <path d="M600 291h509v90H600z" fill="#a4a2a4" />
            <path d="M934 414h67v24h-67z" fill="#a3a2aa" />
            <Grid
              xs={[743, 793, 843, 893, 943, 993, 1042, 1092, 1142]}
              ys={[180, 211, 242, 273, 305, 337, 367, 398, 430, 462, 493, 525, 557, 588, 619, 651]}
            />
            <g fill="#000" fillOpacity="0.150" textAnchor="middle" className="font-['Liberation_Sans']">
              <text x="932" y="362" fontSize="45">US100, 5</text>
              <text x="932" y="397" fontSize="26">US100</text>
            </g>
            <g stroke="#5b5754" strokeDasharray="6 4">
              <path d="M692 140.500h474M692 336.500h417M934 426.500h67" strokeOpacity="0.400" />
              <path d="M692 466.500H2000M967.500 75V670" strokeOpacity="0.850" />
            </g>
            <path d="M692 348.500H2000" stroke="#2b2724" strokeDasharray="1 2" />
            <path d="M692 151.500h480M909 401.500h263" stroke="#2b2724" fill="none" />
            <path d="M692 305.500h409M692 593h409" stroke="#5a5551" />
            <Candles data={US_CANDLES} width={6} />
            <path d="m926 381 17-53" stroke="#0e0c0b" strokeWidth="1.200" />
            <g fill="#3b3733" fontSize="12">
              <text x="1108" y="308">0.5</text>
              <text x="1108" y="597">1</text>
            </g>
            <g fill="#bfb8b3" stroke="#2b4bdc" strokeWidth="1.700">
              {CORNERS.map(([x, y]) => (
                <circle key={`${x}-${y}`} cx={x} cy={y} r="5.300" />
              ))}
              {EDGES.map(([x, y]) => (
                <rect key={`${x}-${y}`} x={x - 5.2} y={y - 5.2} width="10.400" height="10.400" rx="2.500" />
              ))}
            </g>
            <EventMarker x={950.5} y={645} />
            <path d="M1153 457h40v19h-40z" fill="#060606" />
            <circle cx="1162.500" cy="466.500" r="7.300" fill="none" stroke="#ddd" strokeWidth="1.300" />
            <path d="M1159 466.500h7M1162.500 463v7" stroke="#ddd" strokeWidth="1.400" />
          </g>
        </svg>
        <PriceAxis tags={US_TAGS} top={75}>
          <div className="absolute top-[339px] right-0 h-[36px] w-2 bg-[#a6a6c0]" />
          <div className="absolute top-[375px] right-0 h-[32px] w-2 bg-[#2f55f5]" />
        </PriceAxis>
      </div>
      <TimeAxis labels={US_TIMES} left={692}>
        <div className="absolute top-[23px] left-[241px] h-1 w-[68px] bg-[#8f92b8]" />
        <div className="absolute top-px left-[181px] flex h-[22px] w-[188px] items-center justify-between bg-[#2f55f5] px-[7px] text-[11px] font-semibold text-white">
          <span>Fri 06</span>
          <span>18:35</span>
        </div>
        <div className="absolute top-px left-[215px] flex h-[22px] items-center gap-2 bg-[#060606] px-1.5 text-[11px] font-semibold whitespace-nowrap text-white">
          <span>Fri 06 Mar '26</span>
          <span>18:15</span>
        </div>
      </TimeAxis>
      <Legend
        title="US100 · 5 · S"
        values={['O24,737.7', 'H24,743.0', 'L24,728.8', 'C24,732.0', '−2.1 (−0.01%)']}
      />
    </>
  );
}

/* ---------- windows ---------- */

type WindowProps = {
  symbol: string;
  price: string;
  change: string;
  second: IconName;
  ranges: string[];
  light?: boolean;
  children: ReactNode;
};

function TradingWindow({ symbol, price, change, second, ranges, light, children }: WindowProps) {
  return (
    <section
      className={clsx(
        'flex h-screen flex-col border-t border-l bg-[#0d0d0d]',
        light ? 'border-r border-[#6c7070]' : 'rounded-tl-lg border-[#333]',
      )}
    >
      <TabBar symbol={symbol} price={price} change={change} light={light} />
      <Header symbol={symbol} />
      <div className="flex min-h-0 flex-1 border-t-4 border-[#2c2c2c]">
        <LeftRail second={second} />
        <div className="flex min-w-0 flex-1 flex-col border-x-3 border-[#2c2c2c]">
          <main className="relative flex min-h-0 flex-1 flex-col rounded-t-sm bg-[#c1b8ac]">
            {children}
          </main>
          <Footer ranges={ranges} />
        </div>
        <RightRail />
      </div>
    </section>
  );
}

export default function App() {
  return (
    <div className="grid h-screen grid-cols-2 overflow-hidden bg-[#121116] font-['Open_Sans',sans-serif]">
      <div className="min-w-0 bg-linear-to-r from-[#15131a] via-[#1d1a26] to-[#0c0b0e] pt-[5px] pl-[2px]">
        <TradingWindow
          symbol="SP500"
          price="6,739.60"
          change="−1.14%"
          second="ray"
          ranges={['1D', '5D', '1M', '3M', '6M', 'YTD', '1Y', 'All']}
        >
          <SpChart />
          <Brand />
          <FavoritesBar />
        </TradingWindow>
      </div>
      <div className="min-w-0">
        <TradingWindow
          symbol="US100"
          price="24,734.1"
          change="−0.94%"
          second="trend"
          ranges={['1D', '5D', '1M', '3M', '6M', 'YTD', '1Y', '5Y', 'All']}
          light
        >
          <UsChart />
          <Brand />
          <FavoritesBar />
          <ShapeBar />
        </TradingWindow>
      </div>
    </div>
  );
}
